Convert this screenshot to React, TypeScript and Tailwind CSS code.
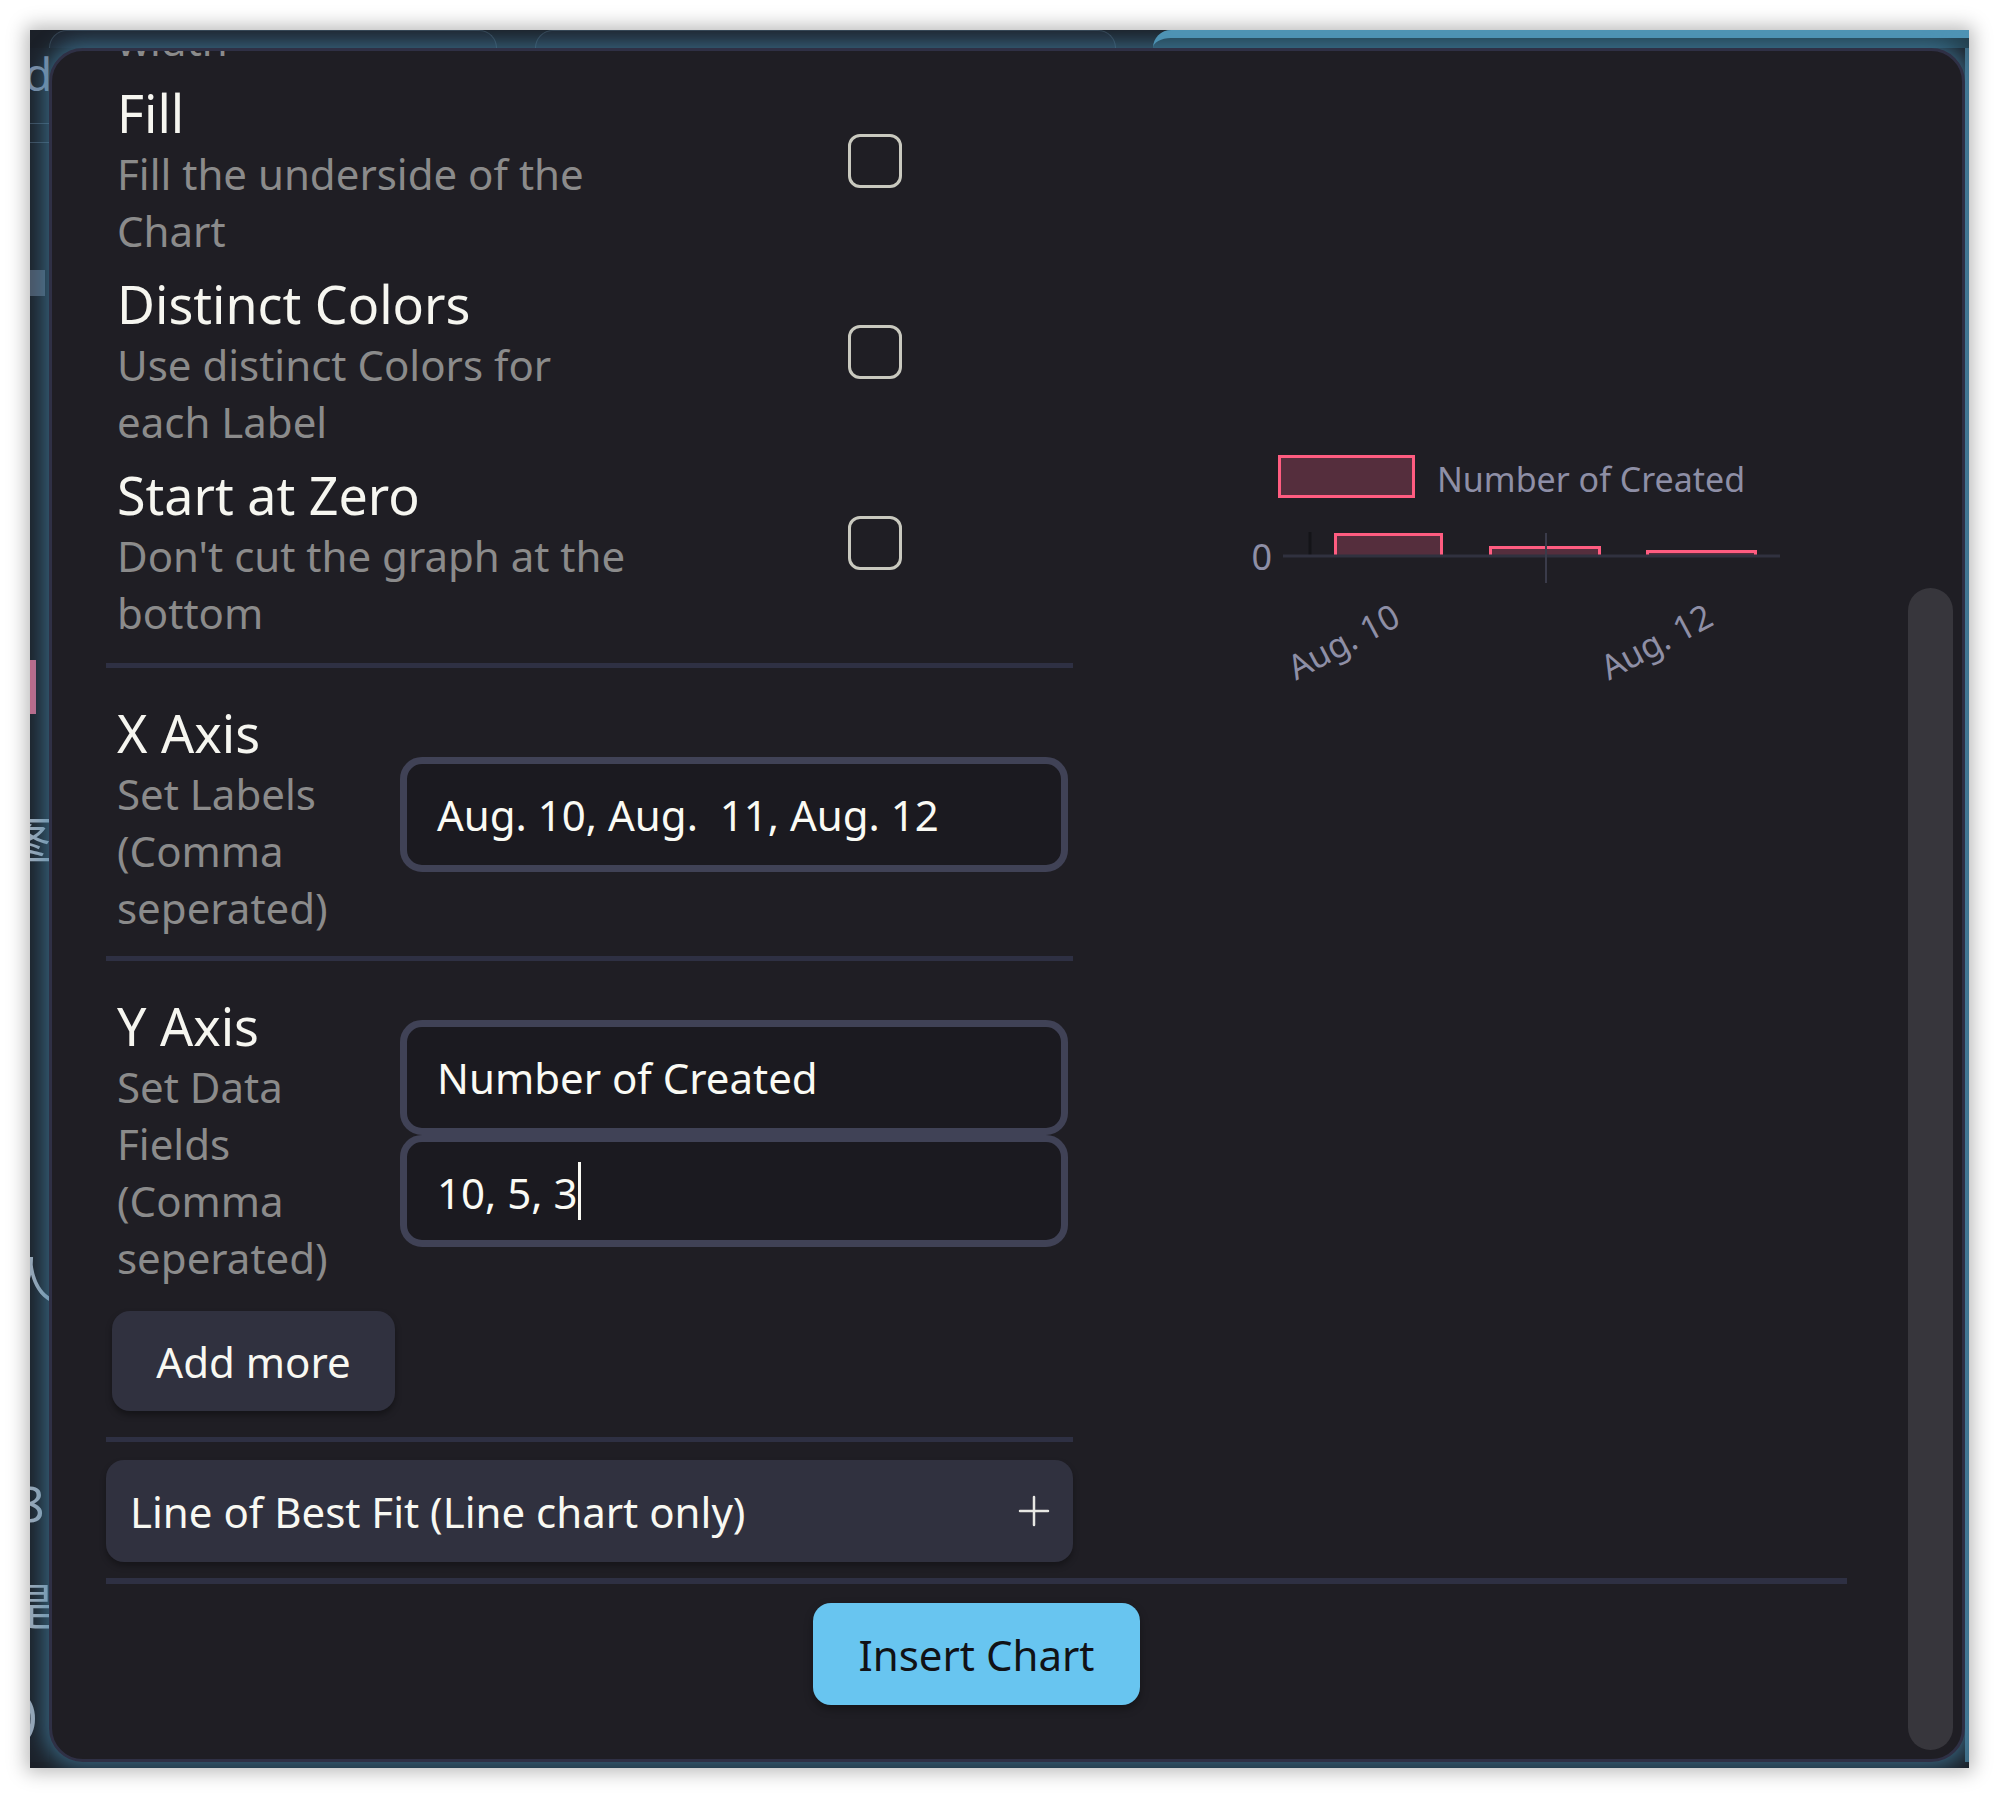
import { Plus } from "lucide-react";

const titleCls = "text-[52px] leading-[65px] text-[#f6f6f0]";
const descCls = "text-[42px] leading-[57px] text-[#8b8b8b]";

function ToggleRow({ title, desc }: { title: string; desc: string }) {
  return (
    <div className="grid grid-cols-[525px_54px] items-start gap-x-[206px] pl-[11px] pt-[12px]">
      <div>
        <div className={titleCls}>{title}</div>
        <div className={descCls}>{desc}</div>
      </div>
      <div className="mt-[54px] h-[54px] w-[54px] rounded-[12px] border-[3px] border-[#c9c9bf]" />
    </div>
  );
}

function Field({
  value,
  height = "h-[115px]",
  caret = false,
}: {
  value: string;
  height?: string;
  caret?: boolean;
}) {
  return (
    <div
      className={`flex ${height} items-center whitespace-pre rounded-[22px] border-[7px] border-[#404256] bg-[#1b1a20] px-[30px] text-[42px] leading-[57px] text-[#fafaf4]`}
    >
      <span>
        {value}
        {caret && (
          <span className="ml-[1px] inline-block h-[58px] w-[3px] bg-[#fafaf4] align-[-11px]" />
        )}
      </span>
    </div>
  );
}

function Divider() {
  return <div className="h-[5px] bg-[#2e3043]" />;
}

function ChartPreview() {
  const bars = [
    { x: 261, w: 109, top: 133 },
    { x: 416, w: 112, top: 146 },
    { x: 573, w: 111, top: 150 },
  ];
  const base = 156;
  return (
    <svg
      width={774}
      height={320}
      viewBox="0 0 774 320"
      className="mt-[389px] block"
      fontFamily="'Noto Sans', sans-serif"
    >
      <rect
        x={206.5}
        y={56.5}
        width={134}
        height={40}
        fill="#552e3d"
        stroke="#ff5c80"
        strokeWidth={3}
      />
      <text x={364} y={92} fontSize={34} fill="#8e8fa6">
        Number of Created
      </text>

      <line x1={237} y1={132} x2={237} y2={157} stroke="#141418" strokeWidth={3} />
      {bars.map((b, i) => (
        <g key={i}>
          <rect x={b.x} y={b.top} width={b.w} height={base - b.top} fill="#552e3d" />
          <path
            d={`M${b.x + 1.5} ${base} V${b.top + 1.5} H${b.x + b.w - 1.5} V${base}`}
            fill="none"
            stroke="#ff5c80"
            strokeWidth={3}
          />
        </g>
      ))}
      <line x1={210} y1={base} x2={707} y2={base} stroke="#30313f" strokeWidth={3} />
      <line x1={473} y1={133} x2={473} y2={183} stroke="#3a3b4a" strokeWidth={2} />

      <text x={199} y={170} fontSize={36} fill="#8e8fa6" textAnchor="end">
        0
      </text>
      <text
        x={270}
        y={241}
        fontSize={34}
        fill="#8e8fa6"
        textAnchor="middle"
        dominantBaseline="central"
        transform="rotate(-28 270 241)"
      >
        Aug. 10
      </text>
      <text
        x={583}
        y={241}
        fontSize={34}
        fill="#8e8fa6"
        textAnchor="middle"
        dominantBaseline="central"
        transform="rotate(-28 583 241)"
      >
        Aug. 12
      </text>
    </svg>
  );
}

function TabStrip() {
  return (
    <div className="flex h-[18px] shrink-0 pl-[19px]">
      <div className="w-[448px] rounded-t-[22px] border-x border-t border-[#34414f] bg-[#1e2530]" />
      <div className="ml-[38px] w-[581px] rounded-t-[22px] border-x border-t border-[#34414f] bg-[#1e2530]" />
      <div className="ml-[37px] flex-1 rounded-tl-[20px] border-t-[8px] border-[#4f94b5] bg-[#23404f]" />
    </div>
  );
}

function BackdropStrip() {
  const cjk = "font-['Noto_Sans_CJK_SC',sans-serif]";
  return (
    <div className="relative w-[19px] shrink-0 overflow-hidden bg-[#1c222b] text-[#9aa8b8]">
      <span className="absolute left-[-6px] top-[2px] text-[46px] leading-none text-[#7b8ca5]">
        d
      </span>
      <div className="absolute left-0 right-0 top-[75px] h-px bg-[#3c4a5a]" />
      <div className="absolute left-0 right-0 top-[94px] h-px bg-[#3c4a5a]" />
      <div className="absolute left-0 right-[4px] top-[222px] h-[26px] bg-[#4a5566]" />
      <div className="absolute left-0 top-[612px] h-[54px] w-[6px] bg-[#c26a8a]" />
      <span className={`absolute left-[-22px] top-[764px] text-[50px] leading-none ${cjk}`}>
        图
      </span>
      <span className={`absolute left-[-24px] top-[1204px] text-[50px] leading-none ${cjk}`}>
        人
      </span>
      <span className="absolute left-[-14px] top-[1430px] text-[50px] leading-none">8</span>
      <span className={`absolute left-[-24px] top-[1530px] text-[50px] leading-none ${cjk}`}>
        是
      </span>
      <span className="absolute left-[-8px] top-[1640px] text-[50px] leading-none">)</span>
    </div>
  );
}

export default function App() {
  return (
    <div className="h-[1799px] w-[1999px] bg-white pl-[30px] pt-[30px] font-['Noto_Sans',sans-serif]">
      <div className="relative flex h-[1738px] w-[1939px] flex-col overflow-hidden bg-[#1b2028] shadow-[0_0_18px_4px_rgba(0,0,0,0.28)]">
        <TabStrip />
        <div className="flex min-h-0 flex-1">
          <BackdropStrip />
          <div className="relative z-10 flex-1 overflow-hidden rounded-[34px] border-[3px] border-[#2f3045] bg-[#1f1e24] shadow-[0_0_20px_6px_rgba(72,140,176,0.6)]">
            <div className="-mt-[40px] pl-[54px] pr-[115px]">
              <div className="grid grid-cols-[967px_1fr]">
                <div>
                  <div className={`${descCls} pl-[11px]`}>width</div>
                  <ToggleRow title="Fill" desc="Fill the underside of the Chart" />
                  <ToggleRow
                    title="Distinct Colors"
                    desc="Use distinct Colors for each Label"
                  />
                  <ToggleRow
                    title="Start at Zero"
                    desc="Don't cut the graph at the bottom"
                  />

                  <div className="mt-[22px]">
                    <Divider />
                  </div>

                  <div className="grid grid-cols-[260px_1fr] items-start gap-x-[23px] pb-[20px] pl-[11px] pr-[5px] pt-[32px]">
                    <div>
                      <div className={titleCls}>X Axis</div>
                      <div className={descCls}>Set Labels (Comma seperated)</div>
                    </div>
                    <div className="mt-[57px]">
                      <Field value="Aug. 10, Aug.  11, Aug. 12" />
                    </div>
                  </div>

                  <Divider />

                  <div className="pt-[32px]">
                    <div className="grid grid-cols-[260px_1fr] items-start gap-x-[23px] pl-[11px] pr-[5px]">
                      <div>
                        <div className={titleCls}>Y Axis</div>
                        <div className={descCls}>Set Data Fields (Comma seperated)</div>
                      </div>
                      <div className="mt-[27px] flex flex-col">
                        <Field value="Number of Created" />
                        <Field value="10, 5, 3" height="h-[112px]" caret />
                      </div>
                    </div>
                    <div className="mt-[25px] pl-[6px]">
                      <button className="h-[100px] w-[283px] rounded-[18px] bg-[#30313f] text-[42px] text-[#f8f8f2] shadow-[0_4px_6px_rgba(0,0,0,0.35)]">
                        Add more
                      </button>
                    </div>
                  </div>

                  <div className="mt-[26px]">
                    <Divider />
                  </div>

                  <div className="mt-[18px] flex h-[102px] items-center justify-between rounded-[18px] bg-[#30313f] pl-[24px] pr-[15px] shadow-[0_4px_6px_rgba(0,0,0,0.3)]">
                    <span className="text-[42px] text-[#f8f8f2]">
                      Line of Best Fit (Line chart only)
                    </span>
                    <Plus size={48} strokeWidth={1.25} color="#e8e8e4" />
                  </div>
                </div>

                <div>
                  <ChartPreview />
                </div>
              </div>

              <div className="mt-[16px] h-[6px] bg-[#2e3043]" />

              <div className="mt-[19px] flex justify-center">
                <button className="h-[102px] w-[327px] rounded-[18px] bg-[#68c5f0] text-[42px] text-[#111216] shadow-[0_4px_8px_rgba(0,0,0,0.35)]">
                  Insert Chart
                </button>
              </div>
            </div>

            <div className="absolute left-[1856px] top-[537px] h-[1162px] w-[45px] rounded-full bg-[#37363c]" />
          </div>
          <div className="w-[4px] shrink-0 bg-[#3e6a82]" />
        </div>
        <div className="h-[6px] shrink-0" />
      </div>
    </div>
  );
}
